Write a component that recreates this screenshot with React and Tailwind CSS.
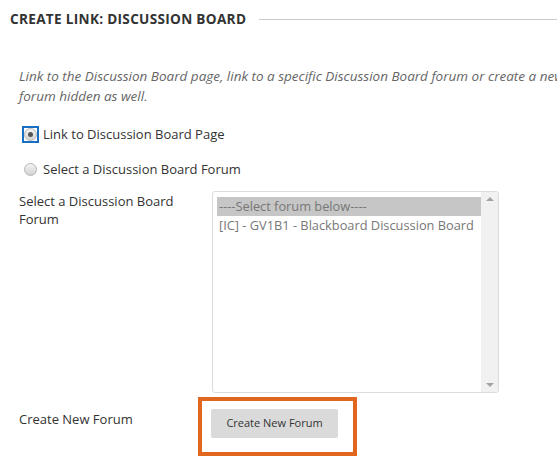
import { useState } from "react";

const font = { fontFamily: '"Open Sans", "Liberation Sans", sans-serif' };

function Radio({ checked, focused }) {
  return (
    <span
      className={
        "w-[17px] h-[17px] flex items-center justify-center shrink-0 " +
        (focused ? "border-2 border-[#1b6fc2]" : "border-2 border-transparent")
      }
    >
      <span className="w-[13px] h-[13px] rounded-full border border-[#b5b5b5] bg-gradient-to-b from-[#f4f4f4] to-[#d2d2d2] flex items-center justify-center">
        {checked && <span className="w-[5px] h-[5px] rounded-full bg-[#555]" />}
      </span>
    </span>
  );
}

export default function App() {
  const [choice, setChoice] = useState(0);
  const [forum, setForum] = useState(0);
  const forums = ["----Select forum below----", "[IC] - GV1B1 - Blackboard Discussion Board"];

  return (
    <div className="w-[557px] h-[465px] overflow-hidden bg-white text-[#333]" style={font}>
      {/* section heading */}
      <div className="flex items-center pl-[10px] pt-[9px] h-[29px]">
        <h2 className="text-[13.6px] font-bold tracking-[0.3px] leading-none whitespace-nowrap">
          CREATE LINK: DISCUSSION BOARD
        </h2>
        <div className="flex-1 h-px bg-[#c9c9c9] ml-[13px]" />
      </div>

      {/* instructions */}
      <p className="mt-[37px] pl-[19px] italic text-[13.5px] leading-[20px] text-[#666] whitespace-nowrap">
        Link to the Discussion Board page, link to a specific Discussion Board forum or create a new
        <br />
        forum hidden as well.
      </p>

      {/* link options */}
      <div className="mt-[20px] pl-[22px] flex flex-col gap-[18px]">
        {["Link to Discussion Board Page", "Select a Discussion Board Forum"].map((label, i) => (
          <label
            key={label}
            onClick={() => setChoice(i)}
            className="flex items-center gap-[4px] text-[13px] leading-[17px] cursor-pointer"
          >
            <Radio checked={choice === i} focused={i === 0} />
            <span>{label}</span>
          </label>
        ))}
      </div>

      {/* forum select */}
      <div className="mt-[13px] flex">
        <div className="w-[212px] pl-[19px] pr-[20px] pt-[1px] text-[13px] leading-[18px]">
          Select a Discussion Board Forum
        </div>
        <div className="w-[287px] h-[202px] rounded-[3px] border border-[#dcdcdc] flex">
          <div className="flex-1 pl-[4px] pt-[5px] text-[12.8px] leading-[19px] text-[#777]">
            {forums.map((f, i) => (
              <div
                key={f}
                onClick={() => setForum(i)}
                className={"pl-[2px] whitespace-nowrap cursor-default " + (forum === i ? "bg-[#c6c6c6]" : "")}
              >
                {f}
              </div>
            ))}
          </div>
          <div className="w-[17px] bg-[#f1f1f1] rounded-r-[3px] flex flex-col justify-between items-center py-[5px]">
            <span className="w-0 h-0 border-x-[4px] border-x-transparent border-b-[4px] border-b-[#a3a3a3]" />
            <span className="w-0 h-0 border-x-[4px] border-x-transparent border-t-[4px] border-t-[#a3a3a3]" />
          </div>
        </div>
      </div>

      {/* create new forum */}
      <div className="mt-[4px] flex">
        <div className="w-[198px] pl-[19px] pt-[13px] text-[13px] leading-[18px]">Create New Forum</div>
        <div className="w-[159px] h-[59px] border-[4px] border-[#e0671d] pl-[9px] pt-[8px]">
          <button className="w-[127px] h-[29px] bg-[#dadada] rounded-[2px] text-[11px] text-[#333]">
            Create New Forum
          </button>
        </div>
      </div>
    </div>
  );
}
